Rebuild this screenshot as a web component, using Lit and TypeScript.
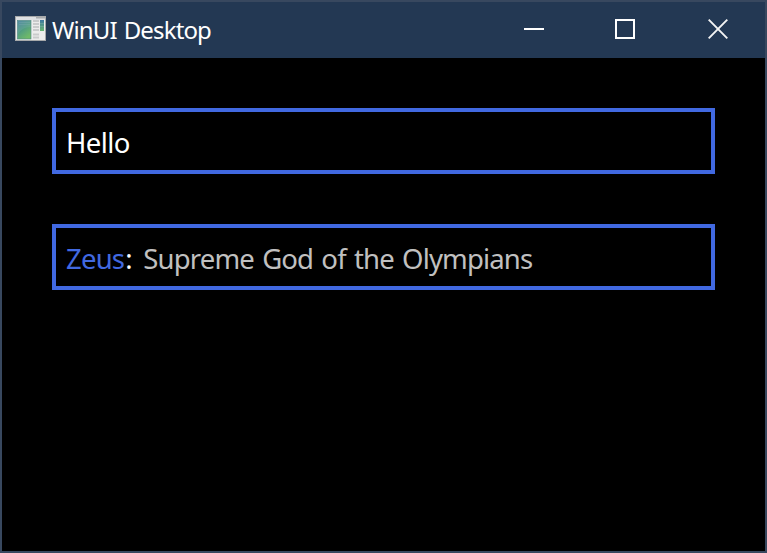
import { LitElement, html, css } from "lit";
import { customElement } from "lit/decorators.js";

@customElement("title-bar")
class TitleBar extends LitElement {
  static styles = css`
    :host {
      display: flex;
      align-items: center;
      height: 56px;
      flex: none;
      background: #233853;
      color: #fff;
    }
    .app-icon { margin: 0 4px 0 12px; flex: none; display: block; }
    .title {
      flex: 1;
      font-size: 24px;
      line-height: 32px;
      letter-spacing: -0.85px;
      word-spacing: 1.5px;
      white-space: nowrap;
    }
    .controls { display: flex; height: 56px; flex: none; }
    .control {
      width: 92px;
      display: flex;
      align-items: center;
      justify-content: center;
      padding-bottom: 2px;
      box-sizing: border-box;
    }
    .minimize { width: 90px; }
    .close { width: 94px; }
    .control svg { display: block; }
  `;
  render() {
    return html`
      <svg class="app-icon" width="34" height="28" viewBox="0 0 34 28">
        <defs>
          <linearGradient id="pane" x1="0" y1="0" x2="0.6" y2="1">
            <stop offset="0" stop-color="#427c9e" />
            <stop offset="0.5" stop-color="#4f9c83" />
            <stop offset="1" stop-color="#6fba68" />
          </linearGradient>
          <linearGradient id="side" x1="0" y1="0" x2="0" y2="1">
            <stop offset="0" stop-color="#3d789f" />
            <stop offset="1" stop-color="#69b571" />
          </linearGradient>
        </defs>
        <rect x="1.5" y="0.5" width="30" height="24" fill="#ececec" stroke="#a7a9aa" />
        <rect x="2" y="1" width="29" height="3" fill="#dfe1e3" />
        <rect x="22" y="1" width="9" height="1.5" fill="#a9acae" />
        <rect x="3" y="4" width="14.5" height="20" fill="#f9faf9" />
        <rect x="3.5" y="4.5" width="13.5" height="18.5" fill="url(#pane)" stroke="#568a86" stroke-width="0.7" />
        <path d="M4 5h12.5v6Q8 11 4 18z" fill="#8bb8b5" opacity="0.22" />
        <path d="M5 6.5h11M5 8.5h11" stroke="#8ab0b9" stroke-width="0.7" opacity="0.4" />
        <path d="M19 5h6M19 8h6M19 11h6M19 14h6M19 18.5h6M19 21.5h6" stroke="#c9cbcc" stroke-width="1.8" />
        <rect x="26" y="4" width="4" height="11" fill="url(#side)" />
        <path d="M26 7.5h4M26 10.5h4" stroke="#a0c8bd" stroke-width="0.7" opacity="0.4" />
      </svg>
      <div class="title">WinUI Desktop</div>
      <div class="controls">
        <div class="control minimize">
          <svg width="20" height="20"><path d="M0 10h20" stroke="#fff" stroke-width="2" /></svg>
        </div>
        <div class="control">
          <svg width="20" height="20"><rect x="1" y="1" width="18" height="18" fill="none" stroke="#fff" stroke-width="2" /></svg>
        </div>
        <div class="control close">
          <svg width="20" height="20"><path d="M.7 .7L19.3 19.3M19.3 .7L.7 19.3" stroke="#f4f4f4" stroke-width="1.9" /></svg>
        </div>
      </div>
    `;
  }
}

@customElement("app-root")
class AppRoot extends LitElement {
  static styles = css`
    :host {
      display: flex;
      flex-direction: column;
      box-sizing: border-box;
      width: 767px;
      height: 553px;
      border: 2px solid #38485f;
      background: #000;
      color: #fff;
      overflow: hidden;
      font-family: "Noto Sans", "Open Sans", sans-serif;
    }
    .content {
      flex: 1;
      display: flex;
      flex-direction: column;
      gap: 50px;
      padding: 50px;
    }
    .field {
      box-sizing: border-box;
      height: 66px;
      border: 4px solid #4169e1;
      padding: 12px 10px 8px;
      font-size: 27.5px;
      line-height: 38px;
      letter-spacing: -0.6px;
      white-space: pre;
    }
    .name { color: #4169e1; letter-spacing: -0.8px; margin-right: 1px; }
    .description {
      color: #c0c0c0;
      letter-spacing: -0.85px;
      word-spacing: 1.9px;
      margin-left: 4.8px;
    }
  `;
  render() {
    return html`
      <title-bar></title-bar>
      <div class="content">
        <div class="field">Hello</div>
        <div class="field"><span class="name">Zeus</span>: <span class="description">Supreme God of the Olympians</span></div>
      </div>
    `;
  }
}
